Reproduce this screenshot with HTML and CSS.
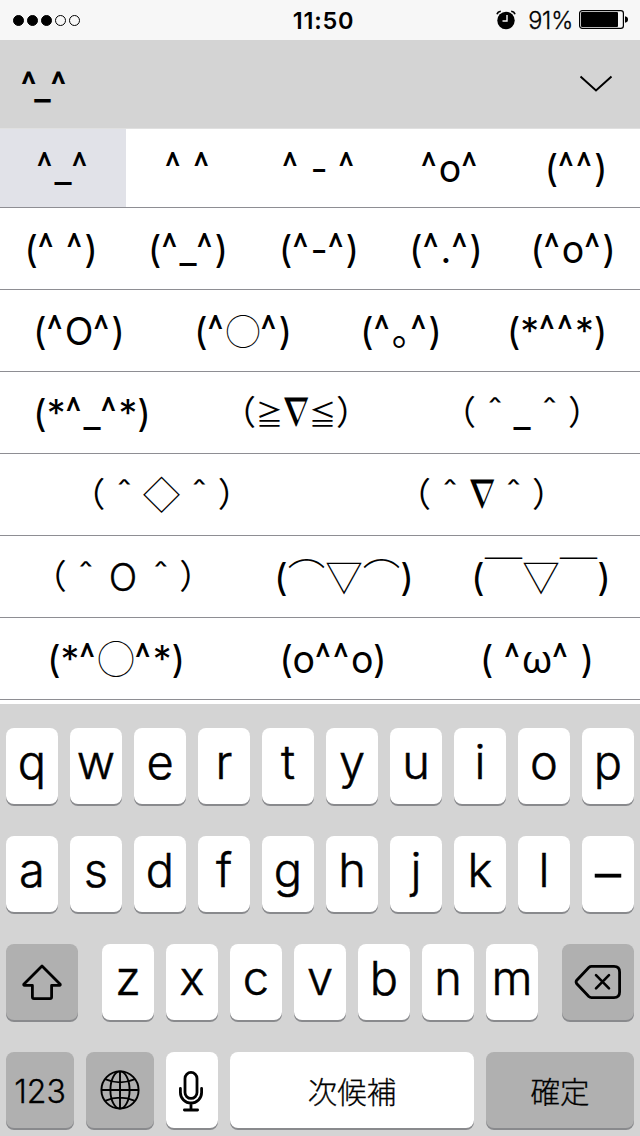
FILE: index.html
```
<!DOCTYPE html>
<html lang="ja">

<head>
    <meta charset="UTF-8">
    <meta name="viewport" content="width=device-width, initial-scale=1.0">
    <title>Kaomoji Keyboard</title>
    <link rel="stylesheet" href="styles.css">
</head>

<body>
    <header class="status-bar">
        <div class="signal">
            <span class="dot full"></span>
            <span class="dot full"></span>
            <span class="dot full"></span>
            <span class="dot"></span>
            <span class="dot"></span>
        </div>
        <div class="time">11:50</div>
        <div class="status-right">
            <svg class="alarm" width="20" height="20" viewBox="0 0 20 20">
                <circle cx="10" cy="10.5" r="8.7" fill="#000" />
                <path d="M1 4.2Q1.8 1.6 4.8 1.2M15.2 1.2Q18.2 1.6 19 4.2" fill="none" stroke="#000" stroke-width="1.6" />
                <path d="M11 5v6H6.5" fill="none" stroke="#f7f7f7" stroke-width="1.4" />
            </svg>
            <span class="percent">91%</span>
            <svg class="battery" width="50" height="20" viewBox="0 0 50 20">
                <rect x=".6" y=".6" width="43.8" height="17.8" rx="2.6" fill="none" stroke="#000" stroke-width="1.2" />
                <rect x="2" y="2" width="37" height="15" rx="1" fill="#000" />
                <path d="M46 6.2q3 .6 3 3.3t-3 3.3z" fill="#000" />
            </svg>
        </div>
    </header>

    <div class="candidate-bar">
        <span class="typed"><i>^</i>_<i>^</i></span>
        <svg class="chevron" width="34" height="18" viewBox="0 0 34 18">
            <path d="M1.5 1.5L17 15.5L32.5 1.5" fill="none" stroke="#000" stroke-width="2" />
        </svg>
    </div>

    <main class="candidates">
        <div class="row row1">
            <div class="face selected"><i>^</i>_<i>^</i></div>
            <div class="face"><i>^</i> <i>^</i></div>
            <div class="face"><i>^</i> - <i>^</i></div>
            <div class="face"><i>^</i>o<i>^</i></div>
            <div class="face">(<i>^^</i>)</div>
        </div>
        <div class="row row2">
            <div class="face">(<i>^</i> <i>^</i>)</div>
            <div class="face">(<i>^</i>_<i>^</i>)</div>
            <div class="face">(<i>^</i>-<i>^</i>)</div>
            <div class="face">(<i>^</i>.<i>^</i>)</div>
            <div class="face">(<i>^</i>o<i>^</i>)</div>
        </div>
        <div class="row row3">
            <div class="face">(<i>^</i>O<i>^</i>)</div>
            <div class="face">(<i>^</i><span class="jp small-circle">◯</span><i>^</i>)</div>
            <div class="face">(<i>^</i><span class="maru">。</span><i>^</i>)</div>
            <div class="face">(*<i>^^</i>*)</div>
        </div>
        <div class="row row4">
            <div class="face">(*<i>^</i>_<i>^</i>*)</div>
            <div class="face"><span class="paren half">（</span><span class="compare">≧</span><span class="nabla">∇</span><span class="compare">≦</span><span class="paren half">）</span></div>
            <div class="face"><span class="paren">（</span><span class="hat">＾</span>_<span class="hat">＾</span><span class="paren">）</span></div>
        </div>
        <div class="row row5">
            <div class="face"><span class="paren">（</span><span class="hat">＾</span><span class="jp">◇</span><span class="hat">＾</span><span class="paren">）</span></div>
            <div class="face"><span class="paren">（</span><span class="hat">＾</span><span class="nabla">∇</span><span class="hat">＾</span><span class="paren">）</span></div>
        </div>
        <div class="row row6">
            <div class="face"><span class="paren">（</span><span class="hat">＾</span><span class="wide-o">O</span><span class="hat">＾</span><span class="paren">）</span></div>
            <div class="face">(<span class="jp">⌒▽⌒</span>)</div>
            <div class="face">(<span class="jp">￣▽￣</span>)</div>
        </div>
        <div class="row row7">
            <div class="face">(*<i>^</i><span class="jp">◯</span><i>^</i>*)</div>
            <div class="face">(o<i>^^</i>o)</div>
            <div class="face">( <i>^</i>ω<i>^</i> )</div>
        </div>
    </main>

    <section class="keyboard">
        <div class="keys">
            <button class="key">q</button>
            <button class="key">w</button>
            <button class="key">e</button>
            <button class="key">r</button>
            <button class="key">t</button>
            <button class="key">y</button>
            <button class="key">u</button>
            <button class="key">i</button>
            <button class="key">o</button>
            <button class="key">p</button>
        </div>
        <div class="keys">
            <button class="key">a</button>
            <button class="key">s</button>
            <button class="key">d</button>
            <button class="key">f</button>
            <button class="key">g</button>
            <button class="key">h</button>
            <button class="key">j</button>
            <button class="key">k</button>
            <button class="key">l</button>
            <button class="key dash">–</button>
        </div>
        <div class="keys">
            <button class="key gray shift">
                <svg width="40" height="36" viewBox="0 0 40 36">
                    <path d="M20 2L38.2 20.2Q38.6 21.4 37.5 21.4H29.6V33Q29.6 34.6 28 34.6H12Q10.4 34.6 10.4 33V21.4H2.5Q1.4 21.4 1.8 20.2Z" fill="none" stroke="#000" stroke-width="2.8" stroke-linejoin="round" />
                </svg>
            </button>
            <button class="key">z</button>
            <button class="key">x</button>
            <button class="key">c</button>
            <button class="key">v</button>
            <button class="key">b</button>
            <button class="key">n</button>
            <button class="key">m</button>
            <button class="key gray delete">
                <svg width="48" height="36" viewBox="0 0 48 36">
                    <path d="M17.5 2.4H40Q45.6 2.4 45.6 8V28Q45.6 33.6 40 33.6H17.5Q16 33.6 14.8 32.5L2.8 19.8Q1.4 18 2.8 16.2L14.8 3.5Q16 2.4 17.5 2.4Z" fill="none" stroke="#000" stroke-width="2.8" />
                    <path d="M22 11.2L35 24.4M35 11.2L22 24.4" stroke="#000" stroke-width="2.6" stroke-linecap="round" />
                </svg>
            </button>
        </div>
        <div class="keys">
            <button class="key gray wide numbers">123</button>
            <button class="key gray wide">
                <svg class="globe" width="40" height="40" viewBox="0 0 40 40" fill="none" stroke="#000" stroke-width="1.9">
                    <circle cx="20" cy="20" r="18.6" />
                    <ellipse cx="20" cy="20" rx="9.6" ry="18.6" />
                    <path d="M20 1V39M1 20H39M5 9.2Q20 15.6 35 9.2M5 30.8Q20 24.4 35 30.8" />
                </svg>
            </button>
            <button class="key mic">
                <svg width="26" height="42" viewBox="0 0 26 42" fill="none" stroke="#000" stroke-width="2.8" stroke-linecap="round">
                    <rect x="7" y="2.4" width="12" height="26" rx="6" />
                    <path d="M2.4 18.5V22.5A10.6 10.6 0 0 0 23.6 22.5V18.5M13 33V39.6M6.4 40H19.6" />
                </svg>
            </button>
            <button class="key space">次候補</button>
            <button class="key gray enter">確定</button>
        </div>
    </section>
</body>

</html>
```
FILE: styles.css
```
* {
    margin: 0;
    padding: 0;
    box-sizing: border-box;
}

body {
    width: 640px;
    height: 1136px;
    overflow: hidden;
    background-color: white;
    color: black;
    font-family: Inter, "Noto Sans CJK JP", sans-serif;
}

.status-bar {
    height: 40px;
    padding: 0 11px 0 13px;
    display: grid;
    grid-template-columns: 1fr auto 1fr;
    align-items: center;
    background-color: #f7f7f7;
}

.signal {
    display: flex;
    gap: 3px;
}

.dot {
    width: 11px;
    height: 11px;
    border: 1px solid black;
    border-radius: 50%;
}

.full {
    background-color: black;
}

.time {
    font-size: 23.5px;
    font-weight: 600;
    letter-spacing: 0.8px;
    padding: 1px 0 0 5px;
}

.status-right {
    display: flex;
    justify-content: flex-end;
    align-items: center;
}

.alarm {
    margin-right: 12px;
}

.percent {
    font-size: 23.5px;
    font-weight: 300;
    letter-spacing: -0.2px;
    margin-right: 6px;
    padding-top: 1px;
    -webkit-text-stroke: 0.3px black;
}

.candidate-bar {
    height: 88px;
    padding: 0 27px 0 21px;
    display: flex;
    justify-content: space-between;
    align-items: center;
    background-color: #d4d4d4;
}

.typed {
    font-size: 35px;
    font-weight: 600;
    padding-top: 4px;
}

.candidates {
    height: 576px;
    border-top: 1px solid #e0e0e0;
}

.row {
    display: grid;
    height: 82px;
    border-bottom: 1px solid #8e8e93;
}

.row1 {
    height: 79px;
    grid-template-columns: 126px 124px 138px 124px 128px;
}

.row2 {
    grid-template-columns: 122px 132px 130px 124px 130px;
}

.row3 {
    grid-template-columns: 158px 170px 146px 166px;
}

.row4 {
    grid-template-columns: 184px 224px 228px;
}

.row5 {
    grid-template-columns: 323px 317px;
}

.row6 {
    grid-template-columns: 246px 196px 198px;
}

.row7 {
    grid-template-columns: 232px 202px 206px;
}

.face {
    height: 81px;
    overflow: hidden;
    font-size: 37.5px;
    line-height: 84px;
    text-align: center;
    white-space: pre;
}

.row1 .face {
    height: 78px;
    line-height: 79px;
}

.face span,
.face i {
    line-height: 1;
}

.selected {
    background-color: #e1e2e8;
}

i {
    font-family: Roboto, sans-serif;
    font-style: normal;
    font-size: 38px;
    letter-spacing: 2px;
    vertical-align: 2px;
}

.typed i {
    font-size: 35px;
    letter-spacing: -2px;
}

.jp,
.hat,
.paren,
.compare,
.maru {
    font-family: "Noto Sans CJK JP", sans-serif;
    font-weight: 300;
}

.small-circle {
    font-size: 35px;
}

.maru {
    font-weight: 400;
    font-feature-settings: "halt";
}

.paren {
    font-size: 34px;
    font-weight: 400;
    vertical-align: 2px;
}

.half {
    font-feature-settings: "halt";
}

.hat {
    font-weight: 400;
    vertical-align: -6px;
}

.compare {
    font-size: 27px;
    font-weight: 400;
    vertical-align: 2px;
}

.nabla {
    font-family: "Liberation Serif", serif;
    font-size: 40px;
    vertical-align: 1px;
}

.wide-o {
    display: inline-block;
    width: 37.5px;
    font-weight: 300;
    -webkit-text-stroke: 0.3px black;
}

.keyboard {
    height: 432px;
    padding: 24px 6px 0;
    display: flex;
    flex-direction: column;
    gap: 32px;
    background-color: #d4d4d4;
}

.keys {
    display: flex;
    gap: 12px;
}

.key {
    width: 52px;
    height: 76px;
    display: flex;
    justify-content: center;
    align-items: center;
    border: none;
    border-radius: 8px;
    background-color: white;
    box-shadow: 0 2px 0 #898a8d;
    color: black;
    font-family: Inter, "Noto Sans CJK JP", sans-serif;
    font-size: 47px;
    font-weight: 300;
    line-height: 68px;
    padding-bottom: 8px;
    -webkit-text-stroke: 0.5px black;
}

.dash {
    font-size: 52px;
    padding-bottom: 0;
}

.gray {
    background-color: #b0b0b0;
    padding-bottom: 0;
}

.shift {
    width: 72px;
    margin-right: 12px;
}

.delete {
    width: 72px;
    margin-left: 12px;
}

.wide {
    width: 68px;
}

.mic {
    padding: 2px 2px 0 0;
}

.numbers {
    font-size: 32px;
    padding-top: 4px;
    -webkit-text-stroke: 0.3px black;
}

.space {
    width: 244px;
    font-size: 29.5px;
    padding: 4px 0 0;
    -webkit-text-stroke: 0.3px black;
}

.enter {
    width: 148px;
    font-size: 29.5px;
    padding-top: 4px;
    -webkit-text-stroke: 0.3px black;
}
```
